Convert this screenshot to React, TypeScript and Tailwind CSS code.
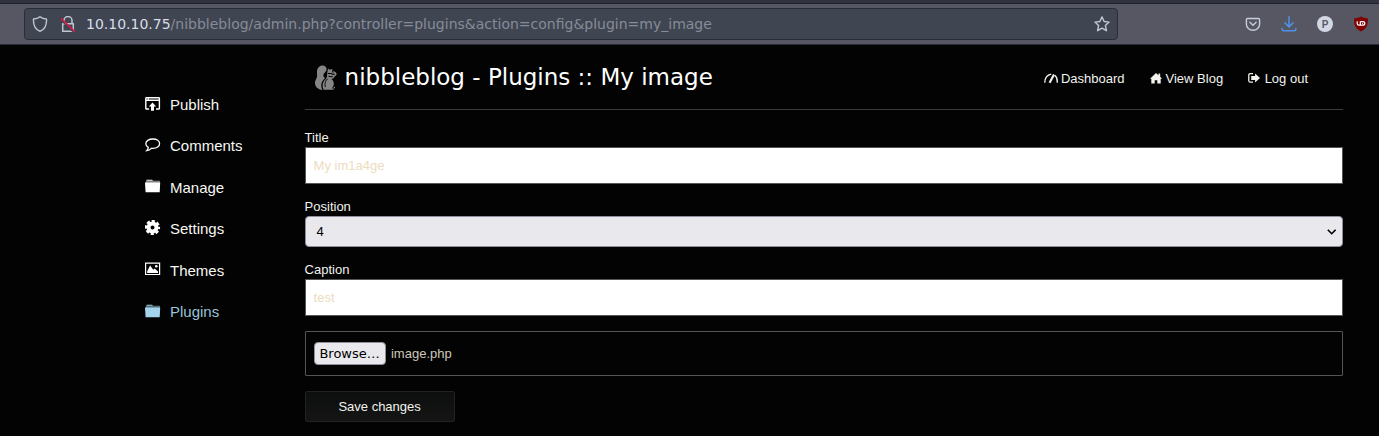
import type { ReactNode } from "react";

const Folder = () => (
  <svg width="16" height="14" viewBox="0 0 16 14" fill="currentColor">
    <path d="M1.500 1.800V.7h5.700l.8 1.100z" />
    <path d="M.8 1.700h14.200v2.300H.8z" opacity=".5" />
    <path d="M0 3.600h15.200l-.5 9.700H.6z" />
  </svg>
);

const Publish = () => (
  <svg width="16" height="14" viewBox="0 0 16 14" fill="currentColor">
    <path d="M1.500 0h12.200a1.400 1.400 0 0 1 1.400 1.400v10a1.400 1.400 0 0 1-1.400 1.400H11v-1.500h2.700V4H1.500v7.300h2.600v1.500H1.500A1.400 1.400 0 0 1 .1 11.400V1.400A1.400 1.400 0 0 1 1.500 0z M1.500 1.500v1h1.200v-1z M3.800 1.500v1h9.900v-1z" fillRule="evenodd" />
    <path d="M7.500 5.500l3.600 4H9v4.300H6V9.500H3.900z" />
  </svg>
);

const Comment = () => (
  <svg width="16" height="14" viewBox="0 0 16 14" fill="none" stroke="currentColor" strokeWidth="1.300">
    <path d="M7.900 1C3.900 1 .8 3 .8 5.700c0 1.500 1 2.800 2.500 3.700 0 1.300-.7 2.300-1.600 3.200 1.900-.2 3.400-.9 4.600-2.300.5.100 1 .1 1.600.1 3.900 0 6.700-2 6.700-4.700S11.800 1 7.900 1z" />
  </svg>
);

const Gear = () => (
  <svg width="16" height="16" viewBox="0 0 16 16" fill="none" stroke="currentColor">
    <circle cx="7.500" cy="7.500" r="4" strokeWidth="4" />
    <circle cx="7.500" cy="7.500" r="6.400" strokeWidth="2.400" strokeDasharray="3.200 1.827" strokeDashoffset="1.600" />
  </svg>
);

const Picture = () => (
  <svg width="16" height="14" viewBox="0 0 16 14" fill="currentColor">
    <path fillRule="evenodd" d="M0 .5h15.200v12.600H0zM1.200 1.700v10.200H14V1.700z" />
    <path d="M2.200 11V9.300L5.100 3.600l3.200 4.200 1.400-1.200 3.300 3V11z" />
    <circle cx="11.300" cy="4.300" r="1.300" />
  </svg>
);

const Squirrel = () => (
  <svg width="23" height="25" viewBox="0 0 23 25" fill="#858585">
    <path d="M12.700 4.500C12.500 2 10.700.5 8.500.5 5.500.5 3.300 3 3 6.500c-.2 2.300.5 4-.2 6-.7 1.700-1.800 3-1.800 5.400 0 3.600 2.900 6.500 7.500 7-1.500-2.500-1.600-5.500-.5-8 .7-1.600 2-2.700 3-4-1.300-.7-1.900-1.700-1.500-3.200.5-1.700 2-2 3.200-5.200z" />
    <path d="M13.500 6.500l.5-3 1.800 1.300 2.500-.9v1.800c2 .4 3.700 1.200 4.200 2.700.3 1.300-.5 2.300-1.600 2.800-.8 1.700-2 2.500-3.500 2.700 2 1.700 3 3.900 2.200 6.400-.4 1.300-1 2.200-1.900 2.900l2 .4v1.200H9.700c-1.400-2.500-1.500-5.600-.2-8 1-1.900 2.800-2.900 3.400-4.800.5-1.700-.2-3.500.6-5.500z" />
    <path d="M13.800 13.600c-2.600 2.200-3.400 5.300-2.500 8.500" fill="none" stroke="#020302" strokeWidth=".9" />
    <path d="M13.700 8.200c1.300 1 2.800-.3 4 .5 1 .7 1.800 1.100 3 .4M18 6.600l1.500.7M14.600 11c1.300 1 2.600.8 4.200.5" fill="none" stroke="#020302" strokeWidth="1.100" />
    <circle cx="20.300" cy="22.600" r=".8" />
  </svg>
);

const Dash = () => (
  <svg width="14" height="12" viewBox="0 0 14 12" fill="none" stroke="currentColor">
    <path d="M.8 9.700C.8 5 3.500 1.800 7.300 1.100M10.700 2.300c2 1.500 2.800 3.700 2.500 7.400" strokeWidth="1.400" />
    <path d="M5.600 9.800L10 1.500" strokeWidth="2.200" />
  </svg>
);

const House = () => (
  <svg width="12" height="12" viewBox="0 0 12 12" fill="currentColor">
    <path d="M6 0L8.500 2.300V.5h1.700v3.300L12 5.800h-1.300v4.700H7.300V7.200H4.700v3.300H1.300V5.800H0z" />
  </svg>
);

const Logout = () => (
  <svg width="12" height="12" viewBox="0 0 12 12" fill="currentColor">
    <path d="M5 .7H2.300Q.8.700.8 2.200v5.500q0 1.500 1.500 1.500H5" fill="none" stroke="currentColor" strokeWidth="1.300" />
    <path d="M3.200 3h3.900V.6L12 5 7.100 9.400V7.100H3.200z" />
  </svg>
);

const menu: { label: string; icon: ReactNode; active?: boolean }[] = [
  { label: "Publish", icon: <Publish /> },
  { label: "Comments", icon: <Comment /> },
  { label: "Manage", icon: <Folder /> },
  { label: "Settings", icon: <Gear /> },
  { label: "Themes", icon: <Picture /> },
  { label: "Plugins", icon: <Folder />, active: true },
];

function Toolbar() {
  return (
    <header className="flex h-[45px] items-center border-b border-[#2b2c38] bg-[#575764] shadow-[inset_0_3px_#313340,inset_0_4px_#20222c] pt-[4px] pl-6 font-['DejaVu_Sans',sans-serif]">
      <div className="flex h-8 w-[1094px] items-center rounded-[4px] border border-[#2a2d39] bg-[#404552] pl-[7px] pr-[7px]">
        <svg width="16" height="16" viewBox="0 0 16 16" fill="none" stroke="#c0c6d2" strokeWidth="1.400" strokeLinejoin="round">
          <path d="M8 .7c1.800 1.500 4 2.200 6.500 2.300.4 5.700-1.700 10.300-6.500 12.300C3.200 13.300 1.100 8.700 1.500 3 4 2.900 6.200 2.200 8 .7z" />
        </svg>
        <svg className="ml-3" width="16" height="16" viewBox="0 0 16 16" fill="none" stroke="#c0c6d2" strokeWidth="1.500">
          <path d="M4 7.500V4.500a4 4 0 0 1 8 0v3M2.700 7.700h10.600v7.500H2.700z" strokeLinejoin="round" />
          <path d="M1 4l12.500 12" stroke="#404552" strokeWidth="1.500" />
          <path d="M1 2.300l14 13.400" stroke="#e8124a" strokeWidth="1.500" />
        </svg>
        <div className="ml-[10px] flex-1 whitespace-nowrap text-[14px] leading-[18px] text-[#868c98]">
          <span className="text-[#d8dde8]">10.10.10.75</span>/nibbleblog/admin.php?controller=plugins&amp;action=config&amp;plugin=my_image
        </div>
        <svg width="16" height="16" viewBox="0 0 16 16" fill="none" stroke="#c0c6d2" strokeWidth="1.400" strokeLinejoin="round">
          <path d="M8 .9l2.100 4.600 5 .6-3.700 3.400 1 5.200L8 12.100l-4.400 2.600 1-5.200L.9 6.100l5-.6z" />
        </svg>
      </div>
      <div className="ml-[127px] flex items-center gap-5">
        <svg width="16" height="16" viewBox="0 0 16 16" fill="none" stroke="#c8cddb" strokeWidth="1.400" strokeLinecap="round" strokeLinejoin="round">
          <path d="M2.600 2.500h10.800q1.200 0 1.200 1.200v4.500a6.600 6 0 0 1-13.200 0V3.700q0-1.200 1.200-1.200zM4.900 6.300L8 9.200l3.100-2.900" />
        </svg>
        <svg width="16" height="16" viewBox="0 0 16 16" fill="none" stroke="#4e92e8" strokeWidth="1.500" strokeLinecap="round" strokeLinejoin="round">
          <path d="M8 .8v10M3.800 6.700L8 10.900l4.200-4.200M1.200 12.500v1q0 1.300 1.300 1.300h11q1.300 0 1.300-1.300v-1" />
        </svg>
        <span className="flex size-4 items-center justify-center rounded-full bg-[#d3d7e4] font-['Liberation_Sans',sans-serif] text-[10px] font-bold text-[#575a68]">P</span>
        <svg width="16" height="16" viewBox="0 0 16 16">
          <path d="M8 .4c2 1.200 4.200 1.700 6.800 1.800.4 6-.6 10-6.800 13.300C1.800 12.200.8 8.200 1.200 2.200 3.800 2.100 6 1.600 8 .4z" fill="#800000" />
          <path d="M4.200 5.200v2.600q0 1.300 1.700 1.300h1.400V5.200" fill="none" stroke="#fff" strokeWidth="1.200" />
          <path d="M7.500 5.700h2.200q2.100 0 2.100 1.700T9.700 9.100H7.500" fill="none" stroke="#fff" strokeWidth="1.200" />
          <path d="M9.600 6.900v1" stroke="#fff" strokeWidth="1" />
        </svg>
      </div>
    </header>
  );
}

export default function App() {
  return (
    <div className="flex h-[436px] w-[1379px] flex-col overflow-hidden bg-[#020302] font-['Liberation_Sans',Arial,sans-serif] text-[13px] text-[#f2f2ee]">
      <Toolbar />
      <div className="flex flex-1">
        <nav className="w-[304.6px] shrink-0 pl-[145px] pt-[39.500px] text-[15px]">
          {menu.map((m) => (
            <a key={m.label} className={m.active ? "flex h-[41.4px] items-center text-[#a5d3ec]" : "flex h-[41.4px] items-center text-white"}>
              <span className="mb-[3px] w-[25px]">{m.icon}</span>
              <span className={m.active ? "text-[#9cc3dc]" : "text-[#f7f7f3]"}>{m.label}</span>
            </a>
          ))}
        </nav>
        <main className="w-[1038px]">
          <div className="flex h-[65px] items-center border-b border-[#3c3c3c]">
            <div className="ml-[9px] flex items-center">
              <Squirrel />
              <h1 className="ml-[8px] whitespace-nowrap font-['DejaVu_Sans',sans-serif] text-[23px] leading-7 text-white">nibbleblog - Plugins :: My image</h1>
            </div>
            <div className="ml-auto mr-[34.6px] mt-[3px] flex gap-[25px]">
              <a className="flex items-center gap-[3px]"><Dash />Dashboard</a>
              <a className="flex items-center gap-[4px]"><House />View Blog</a>
              <a className="flex items-center gap-[4.500px]"><Logout />Log out</a>
            </div>
          </div>
          <form className="flex flex-col pt-[19px]">
            <label className="h-[18px] leading-[17px]">Title</label>
            <input className="h-[37px] border border-[#555] bg-white px-2 text-[#ecdcc0] outline-none" defaultValue="My im1a4ge" />
            <label className="mt-[14px] h-[18px] leading-[17px]">Position</label>
            <div className="flex h-[31px] items-center justify-between rounded-[4px] border border-[#8f8f9d] bg-[#e9e9ed] pl-[11px] pr-[5.600px] text-black">
              <span>4</span>
              <svg width="9" height="6" viewBox="0 0 9 6" fill="none" stroke="#000" strokeWidth="1.600"><path d="M.8.700l3.900 4 3.900-4" /></svg>
            </div>
            <label className="mt-[14px] h-[18px] leading-[17px]">Caption</label>
            <input className="h-[37px] border border-[#555] bg-white px-2 text-[#ecdcc0] outline-none" defaultValue="test" />
            <div className="mt-[15px] flex h-[45px] items-center rounded-[1px] border border-[#555] pl-2 text-[#cfc8b9]">
              <button type="button" className="flex h-[23px] w-[72px] items-center justify-center rounded-[4px] border border-[#8f8f9d] bg-[#e9e9ed] font-['DejaVu_Sans',sans-serif] text-[13px] text-black">Browse…</button>
              <span className="ml-[5.400px]">image.php</span>
            </div>
            <button type="button" className="mt-[15px] h-[31px] w-[150px] rounded-[2px] border border-[#222] bg-linear-to-b from-[#0d0e0e] to-[#151515]">Save changes</button>
          </form>
        </main>
      </div>
    </div>
  );
}
